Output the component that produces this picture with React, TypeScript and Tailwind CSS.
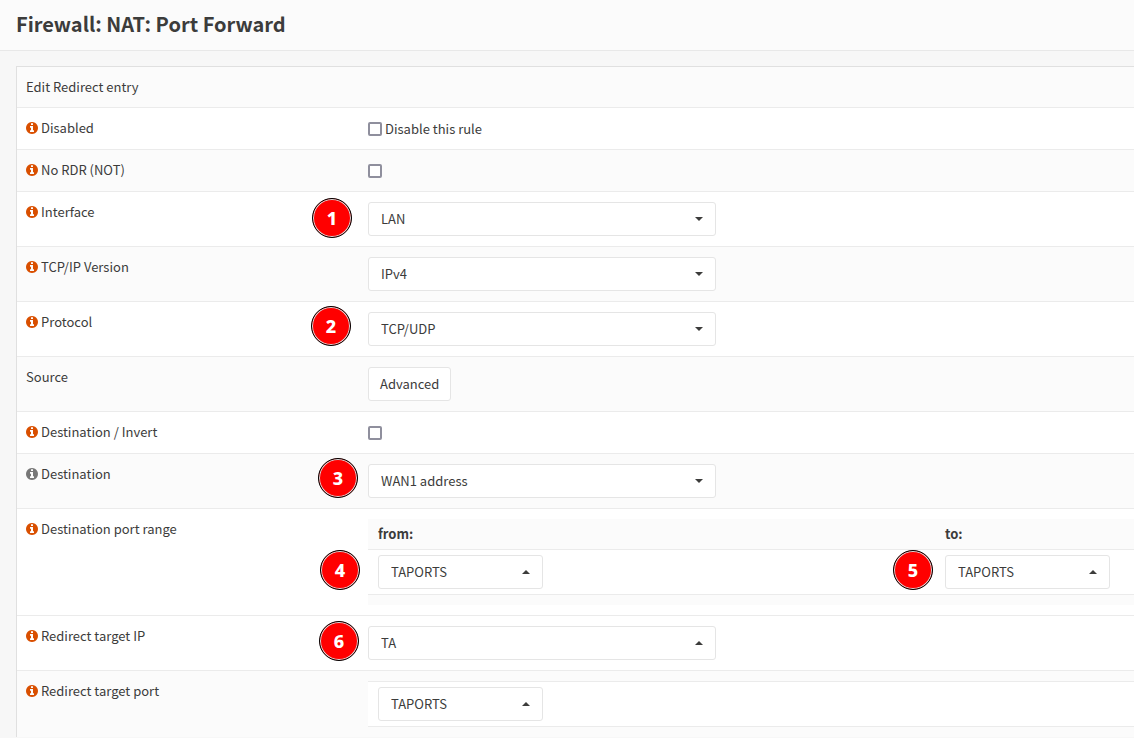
import type { ReactNode } from "react";

function InfoIcon({ tone }: { tone: string }) {
  return (
    <svg
      viewBox="128 128 1536 1536"
      className={`size-3 shrink-0 fill-current ${tone}`}
      aria-hidden="true"
    >
      <path d="M1152 1376v-160q0-14-9-23t-23-9h-96v-512q0-14-9-23t-23-9h-320q-14 0-23 9t-9 23v160q0 14 9 23t23 9h96v320h-96q-14 0-23 9t-9 23v160q0 14 9 23t23 9h448q14 0 23-9t9-23zm-128-896v-160q0-14-9-23t-23-9h-192q-14 0-23 9t-9 23v160q0 14 9 23t23 9h192q14 0 23-9t9-23zm640 416q0 209-103 385.5t-279.5 279.5-385.5 103-385.5-103-279.5-279.5-103-385.5 103-385.5 279.5-279.5 385.5-103 385.5 103 279.5 279.5 103 385.5z" />
    </svg>
  );
}

function Badge({ n, place }: { n: number; place: string }) {
  return (
    <span
      className={`absolute ${place} flex size-10 items-center justify-center rounded-full border border-black bg-[#ff0000] font-['Noto_Sans',sans-serif] text-lg leading-none font-extrabold text-white ring-1 ring-[#dddddd] ring-inset`}
    >
      {n}
    </span>
  );
}

function Caret({ up }: { up?: boolean }) {
  return (
    <svg
      viewBox="0 0 8 4"
      className="pointer-events-none absolute top-[15px] right-[13px] h-1 w-2 fill-[#3c3c3b]"
      aria-hidden="true"
    >
      <path d={up ? "M0 4 4 0l4 4z" : "M0 0h8L4 4z"} />
    </svg>
  );
}

function Picker({
  id,
  value,
  up,
  small,
  badge,
}: {
  id: string;
  value: string;
  up?: boolean;
  small?: boolean;
  badge?: ReactNode;
}) {
  return (
    <div className={`relative ${small ? "w-[165px]" : "w-[348px]"}`}>
      <select
        id={id}
        className="block h-[34px] w-full appearance-none rounded-[3px] border border-[#e5e5e5] bg-white px-3 leading-5"
      >
        <option>{value}</option>
      </select>
      <Caret up={up} />
      {badge}
    </div>
  );
}

function Row({
  label,
  htmlFor,
  info,
  striped,
  children,
}: {
  label: string;
  htmlFor?: string;
  info?: "on" | "off";
  striped?: boolean;
  children: ReactNode;
}) {
  return (
    <div
      className={`flex border-t border-[#ebebeb] ${striped ? "bg-[#fbfbfb]" : "bg-white"}`}
    >
      <div className="w-[341px] shrink-0 px-[9px] py-[10px]">
        <label htmlFor={htmlFor} className="flex h-5 items-center gap-[3px]">
          {info && (
            <InfoIcon
              tone={info === "on" ? "text-[#d94f00]" : "text-[#777777]"}
            />
          )}
          {label}
        </label>
      </div>
      <div className="min-w-0 grow py-[10px] pl-[10px]">{children}</div>
    </div>
  );
}

function Check({ id, text }: { id: string; text?: string }) {
  return (
    <div className="flex h-[21px] items-center gap-[3px]">
      <input
        id={id}
        type="checkbox"
        className="size-[14px] appearance-none rounded-[2px] border-2 border-[#8f8f9d] bg-white"
      />
      {text && <label htmlFor={id}>{text}</label>}
    </div>
  );
}

export default function App() {
  return (
    <div className="min-h-screen overflow-hidden bg-[#f7f7f7] font-['Noto_Sans_CJK_SC',sans-serif] text-[13px] leading-5 text-[#3c3c3b]">
      <header className="border-b border-[#e8e8e8] bg-[#fbfbfb] px-4 pt-[9px] pb-[11px]">
        <h1 className="text-xl leading-[30px] font-bold">
          Firewall: NAT: Port Forward
        </h1>
      </header>
      <main className="pt-[15px] pl-4">
        <form className="border-t border-l border-[#e0e0e0]">
          <h2 className="bg-[#fbfbfb] px-[9px] py-[10px]">
            Edit Redirect entry
          </h2>
          <Row label="Disabled" htmlFor="disabled" info="on">
            <Check id="disabled" text="Disable this rule" />
          </Row>
          <Row label="No RDR (NOT)" htmlFor="nordr" info="on" striped>
            <Check id="nordr" />
          </Row>
          <Row label="Interface" htmlFor="interface" info="on">
            <Picker
              id="interface"
              value="LAN"
              badge={<Badge n={1} place="-top-1 -left-14" />}
            />
          </Row>
          <Row label="TCP/IP Version" htmlFor="ipversion" info="on" striped>
            <Picker id="ipversion" value="IPv4" />
          </Row>
          <Row label="Protocol" htmlFor="protocol" info="on">
            <Picker
              id="protocol"
              value="TCP/UDP"
              badge={<Badge n={2} place="-top-[6px] -left-[57px]" />}
            />
          </Row>
          <Row label="Source" htmlFor="source" striped>
            <button
              id="source"
              type="button"
              className="block h-[34px] rounded-[3px] border border-[#e5e5e5] bg-white px-[11px]"
            >
              Advanced
            </button>
          </Row>
          <Row label="Destination / Invert" htmlFor="invert" info="on">
            <Check id="invert" />
          </Row>
          <Row label="Destination" htmlFor="destination" info="off" striped>
            <Picker
              id="destination"
              value="WAN1 address"
              badge={<Badge n={3} place="-top-[6px] -left-[50px]" />}
            />
          </Row>
          <Row label="Destination port range" htmlFor="port-from" info="on">
            <div className="bg-[#fbfbfb] pb-[10px]">
              <div className="flex font-bold">
                <label
                  htmlFor="port-from"
                  className="w-[567px] shrink-0 px-[10px] py-[5px]"
                >
                  from:
                </label>
                <label htmlFor="port-to" className="px-[10px] py-[5px]">
                  to:
                </label>
              </div>
              <div className="flex border-y border-[#ebebeb] bg-white">
                <div className="w-[567px] shrink-0 px-[10px] py-[5px]">
                  <Picker
                    id="port-from"
                    value="TAPORTS"
                    up
                    small
                    badge={<Badge n={4} place="-top-[5px] -left-[58px]" />}
                  />
                </div>
                <div className="px-[10px] py-[5px]">
                  <Picker
                    id="port-to"
                    value="TAPORTS"
                    up
                    small
                    badge={<Badge n={5} place="-top-[5px] -left-[52px]" />}
                  />
                </div>
              </div>
            </div>
          </Row>
          <Row label="Redirect target IP" htmlFor="target-ip" info="on">
            <Picker
              id="target-ip"
              value="TA"
              up
              badge={<Badge n={6} place="-top-[5px] -left-[49px]" />}
            />
          </Row>
          <Row label="Redirect target port" htmlFor="target-port" info="on" striped>
            <div className="border-y border-[#ebebeb] bg-white px-[10px] py-[5px]">
              <Picker id="target-port" value="TAPORTS" up small />
            </div>
          </Row>
        </form>
      </main>
    </div>
  );
}
